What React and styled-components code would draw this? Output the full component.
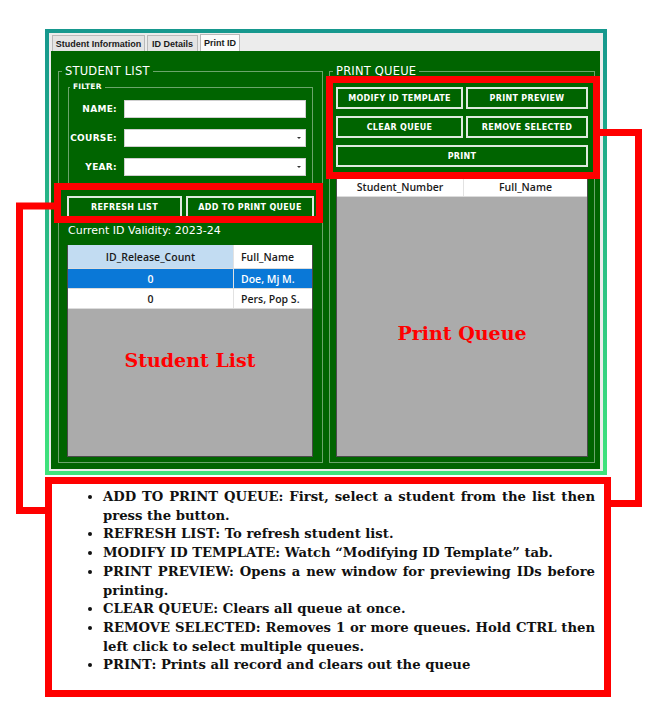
import styled, { createGlobalStyle } from 'styled-components';

const GlobalStyle = createGlobalStyle`
  html, body {
    margin: 0;
    padding: 0;
    background: #ffffff;
  }
`;

const Page = styled.div`
  position: relative;
  width: 665px;
  height: 720px;
  box-sizing: border-box;
  padding: 29px 0 0 45px;
  overflow: hidden;
  font-family: "DejaVu Sans", sans-serif;
`;

const Window = styled.div`
  width: 562px;
  height: 446px;
  box-sizing: border-box;
  border: 4px solid transparent;
  border-image: linear-gradient(180deg, #16988e, #3fe37c) 1;
  background: #ececec;
  padding: 0 3px 2px 2px;
  display: flex;
  flex-direction: column;
`;

const TabStrip = styled.div`
  height: 18px;
  display: flex;
  align-items: flex-end;
  gap: 2px;
  padding-left: 1px;
`;

const Tab = styled.div`
  width: ${({ $w }) => $w}px;
  height: ${({ $active }) => ($active ? 17 : 16)}px;
  box-sizing: border-box;
  border: 1px solid #b9b9b9;
  border-bottom: none;
  background: ${({ $active }) => ($active ? '#fbfbfb' : '#e4e4e4')};
  font-family: "Liberation Sans", sans-serif;
  font-size: 9px;
  font-weight: 700;
  color: #1a1a1a;
  display: flex;
  align-items: center;
  justify-content: center;
  white-space: nowrap;
`;

const Panel = styled.div`
  flex: 1;
  background: #006400;
  display: flex;
  gap: 6px;
  box-sizing: border-box;
  padding: 12px 5px 6px 7px;
`;

const Group = styled.fieldset`
  margin: 0;
  min-width: 0;
  width: ${({ $w }) => $w}px;
  box-sizing: border-box;
  border: 1px solid rgba(255, 255, 255, 0.42);
  padding: ${({ $pad }) => $pad};
  display: flex;
  flex-direction: column;
`;

const Legend = styled.legend`
  padding: 0 3px;
  margin-left: ${({ $ml }) => $ml}px;
  color: #ffffff;
  font-size: ${({ $size }) => $size}px;
  font-weight: ${({ $bold }) => ($bold ? 700 : 400)};
  line-height: ${({ $lh }) => $lh}px;
  letter-spacing: 0.2px;
`;

const FilterGrid = styled.div`
  display: grid;
  grid-template-columns: 48px 182px;
  grid-auto-rows: 18px;
  column-gap: 7px;
  row-gap: 11px;
  align-items: center;
`;

const FieldLabel = styled.label`
  color: #ffffff;
  font-size: 9px;
  font-weight: 700;
  text-align: right;
  letter-spacing: 0.3px;
`;

const Field = styled.div`
  position: relative;
  height: 18px;
  background: #ffffff;
  border: 1px solid #cfcfcf;
  box-sizing: border-box;

  ${({ $select }) =>
    $select &&
    `
    &::after {
      content: '';
      position: absolute;
      right: 4px;
      top: 7px;
      border-left: 2px solid transparent;
      border-right: 2px solid transparent;
      border-top: 2px solid #333;
    }
  `}
`;

const ButtonGrid = styled.div`
  display: grid;
  grid-template-columns: ${({ $cols }) => $cols};
  grid-auto-rows: 22px;
  column-gap: ${({ $cg }) => $cg}px;
  row-gap: 7px;
  margin: ${({ $m }) => $m};
`;

const GreenButton = styled.button`
  grid-column: ${({ $span }) => ($span ? '1 / span 2' : 'auto')};
  margin: 0;
  padding: 0;
  background: #006400;
  border: 2px solid #dfe9df;
  color: #ffffff;
  font-family: "DejaVu Sans", sans-serif;
  font-size: 8px;
  font-weight: 700;
  letter-spacing: 0.3px;
  white-space: nowrap;
`;

const Validity = styled.div`
  margin-top: 6px;
  color: #ffffff;
  font-size: 11px;
  line-height: 13px;
`;

const Table = styled.div`
  flex: 1;
  display: flex;
  flex-direction: column;
  margin: ${({ $m }) => $m};
  border: 1px solid #4a4a4a;
  border-top: none;
  font-family: "Open Sans", sans-serif;
  font-size: 10.5px;
  font-weight: 600;
`;

const Row = styled.div`
  display: grid;
  grid-template-columns: ${({ $cols }) => $cols};
  height: ${({ $h }) => $h}px;
  background: ${({ $sel }) => ($sel ? '#0a78d7' : '#ffffff')};
  color: ${({ $sel }) => ($sel ? '#ffffff' : '#1a1a1a')};
  border-bottom: 1px solid #dcdcdc;
  box-sizing: border-box;
`;

const Cell = styled.div`
  display: flex;
  align-items: center;
  justify-content: ${({ $left }) => ($left ? 'flex-start' : 'center')};
  padding-left: ${({ $left }) => ($left ? 7 : 0)}px;
  background: ${({ $bg }) => $bg || 'transparent'};
  border-right: ${({ $last }) => ($last ? 'none' : '1px solid #e2e2e2')};
  white-space: nowrap;
  overflow: hidden;
`;

const TableBody = styled.div`
  flex: 1;
  background: #ababab;
  display: flex;
  justify-content: center;
  padding-top: ${({ $pt }) => $pt}px;
`;

const Callout = styled.div`
  color: #ff0000;
  font-family: "DejaVu Serif", serif;
  font-size: 19px;
  font-weight: 700;
  line-height: 24px;
`;

const Notes = styled.div`
  margin-top: 2px;
  width: 566px;
  height: 220px;
  box-sizing: border-box;
  border: 7px solid #ff0000;
  background: #ffffff;
  padding: 4px 9px 0 51px;
`;

const NoteList = styled.ul`
  margin: 0;
  padding: 0;
  font-family: "DejaVu Serif", serif;
  font-size: 13.2px;
  font-weight: 700;
  line-height: 18.7px;
  color: #111;
  text-align: justify;
`;

const Overlay = styled.svg`
  position: absolute;
  left: 0;
  top: 0;
  pointer-events: none;
`;

const notes = [
  'ADD TO PRINT QUEUE: First, select a student from the list then press the button.',
  'REFRESH LIST: To refresh student list.',
  'MODIFY ID TEMPLATE: Watch \u201cModifying ID Template\u201d tab.',
  'PRINT PREVIEW: Opens a new window for previewing IDs before printing.',
  'CLEAR QUEUE: Clears all queue at once.',
  'REMOVE SELECTED: Removes 1 or more queues. Hold CTRL then left click to select multiple queues.',
  'PRINT: Prints all record and clears out the queue',
];

const students = [
  { count: 0, name: 'Doe, Mj M.', selected: true },
  { count: 0, name: 'Pers, Pop S.' },
];

const App = () => {
  return (
    <Page>
      <GlobalStyle />
      <Window>
        <TabStrip>
          <Tab $w={93}>Student Information</Tab>
          <Tab $w={51}>ID Details</Tab>
          <Tab $w={40} $active>Print ID</Tab>
        </TabStrip>
        <Panel>
          <Group $w={265} $pad="3px 9px 5px 9px">
            <Legend $ml={-6} $size={11.5} $lh={16}>STUDENT LIST</Legend>
            <Group $pad="8px 0 10px 0">
              <Legend $ml={1} $size={7.5} $lh={10} $bold>FILTER</Legend>
              <FilterGrid>
                <FieldLabel>NAME:</FieldLabel>
                <Field />
                <FieldLabel>COURSE:</FieldLabel>
                <Field $select />
                <FieldLabel>YEAR:</FieldLabel>
                <Field $select />
              </FilterGrid>
            </Group>
            <ButtonGrid $cols="115px 128px" $cg={4} $m="9px 0 0 -1px">
              <GreenButton>REFRESH LIST</GreenButton>
              <GreenButton>ADD TO PRINT QUEUE</GreenButton>
            </ButtonGrid>
            <Validity>Current ID Validity: 2023-24</Validity>
            <Table $m="8px 0 0 -1px">
              <Row $cols="166px 1fr" $h={24}>
                <Cell $bg="#c2dcf2">ID_Release_Count</Cell>
                <Cell $left $last>Full_Name</Cell>
              </Row>
              {students.map((s) => (
                <Row key={s.name} $cols="166px 1fr" $h={20} $sel={s.selected}>
                  <Cell>{s.count}</Cell>
                  <Cell $left $last>{s.name}</Cell>
                </Row>
              ))}
              <TableBody $pt={39}>
                <Callout>Student List</Callout>
              </TableBody>
            </Table>
          </Group>
          <Group $w={266} $pad="8px 6px 5px 6px">
            <Legend $ml={-3} $size={11.5} $lh={16}>PRINT QUEUE</Legend>
            <ButtonGrid $cols="127px 1fr" $cg={3} $m="0">
              <GreenButton>MODIFY ID TEMPLATE</GreenButton>
              <GreenButton>PRINT PREVIEW</GreenButton>
              <GreenButton>CLEAR QUEUE</GreenButton>
              <GreenButton>REMOVE SELECTED</GreenButton>
              <GreenButton $span>PRINT</GreenButton>
            </ButtonGrid>
            <Table $m="11px 0 0 0">
              <Row $cols="127px 1fr" $h={19}>
                <Cell>Student_Number</Cell>
                <Cell $last>Full_Name</Cell>
              </Row>
              <TableBody $pt={124}>
                <Callout>Print Queue</Callout>
              </TableBody>
            </Table>
          </Group>
        </Panel>
      </Window>

      <Notes>
        <NoteList>
          {notes.map((n) => (
            <li key={n}>{n}</li>
          ))}
        </NoteList>
      </Notes>

      <Overlay width="665" height="720" viewBox="0 0 665 720">
        <g fill="none" stroke="#ff0000" strokeWidth="7">
          <rect x="57.5" y="186.5" width="262" height="33" />
          <rect x="329.5" y="79.5" width="267" height="96" />
          <polyline points="54,206 19.5,206 19.5,510.5 46,510.5" />
          <polyline points="600,132.5 638.5,132.5 638.5,503.5 610,503.5" />
        </g>
      </Overlay>
    </Page>
  );
};

export default App;
